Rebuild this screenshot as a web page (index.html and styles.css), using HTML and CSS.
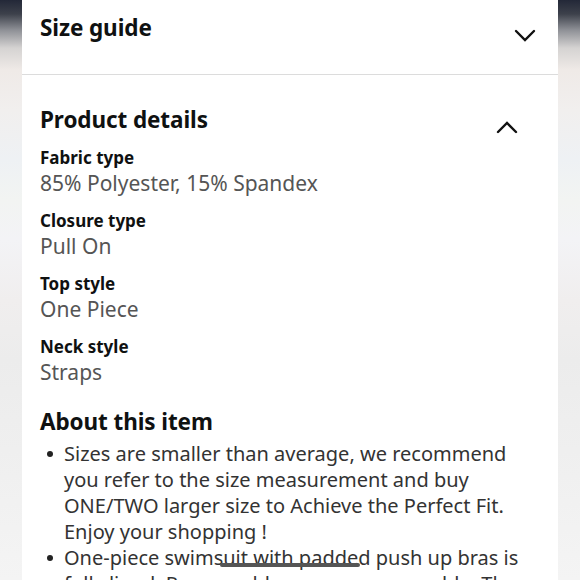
FILE: index.html
```html
<!DOCTYPE html>
<html>
<head>
<meta charset="utf-8">
<link rel="stylesheet" href="styles.css">
</head>
<body>
<div class="page">
  <div class="gutter"></div>
  <main class="panel">
    <section class="section size-guide">
      <h2 class="title">Size guide</h2>
      <svg class="chev chev-down" width="22" height="14" viewBox="0 0 22 14"><path d="M2 2 L11 11 L20 2" fill="none" stroke="#111" stroke-width="2.4" stroke-linecap="round"/></svg>
    </section>
    <section class="section details">
      <div class="details-head">
        <h2 class="title">Product details</h2>
        <svg class="chev chev-up" width="22" height="14" viewBox="0 0 22 14"><path d="M2 12 L11 3 L20 12" fill="none" stroke="#111" stroke-width="2.4" stroke-linecap="round"/></svg>
      </div>
      <dl class="attrs">
        <div class="attr"><dt>Fabric type</dt><dd>85% Polyester, 15% Spandex</dd></div>
        <div class="attr"><dt>Closure type</dt><dd>Pull On</dd></div>
        <div class="attr"><dt>Top style</dt><dd>One Piece</dd></div>
        <div class="attr"><dt>Neck style</dt><dd>Straps</dd></div>
      </dl>
      <h2 class="title about">About this item</h2>
      <ul class="bullets">
        <li>Sizes are smaller than average, we recommend you refer to the size measurement and buy ONE/TWO larger size to Achieve the Perfect Fit. Enjoy your shopping !</li>
        <li>One-piece swimsuit with padded push up bras is fully lined. Removeable cups are removable. The</li>
      </ul>
    </section>
  </main>
  <div class="gutter"></div>
  <div class="home-bar"></div>
</div>
</body>
</html>
```
FILE: styles.css
```css
html, body {
  margin: 0;
  padding: 0;
}
body {
  width: 580px;
  height: 580px;
  overflow: hidden;
  font-family: "Noto Sans", "Open Sans", sans-serif;
  color: #0f1111;
}
.page {
  position: relative;
  display: flex;
  height: 580px;
  overflow: hidden;
}
.gutter {
  width: 22px;
  flex: none;
  background: linear-gradient(180deg, #232838 0px, #3d414b 14px, #8e9096 30px, #d5d3d2 48px, #efeae7 70px, #f1efee 110px, #eef1f4 160px, #f2f4f2 200px, #f3f3f6 240px, #f0eeee 300px, #ececec 360px, #efefef 450px, #f4f4f4 580px);
}
.panel {
  flex: 1;
  background: #fff;
  min-width: 0;
}
.section {
  padding: 0 18px;
}
.size-guide {
  height: 74px;
  border-bottom: 1px solid #dcdcdc;
  display: flex;
  justify-content: space-between;
  align-items: flex-start;
}
.title {
  margin: 0;
  font-size: 22.5px;
  line-height: 32px;
  font-weight: 700;
  letter-spacing: -0.1px;
}
.size-guide .title {
  margin-top: 12px;
}
.chev {
  display: block;
  flex: none;
}
.chev-down {
  margin-top: 29px;
  margin-right: 4px;
}
.details {
  padding-top: 29px;
}
.details-head {
  display: flex;
  justify-content: space-between;
  align-items: flex-start;
  height: 32px;
}
.chev-up {
  margin-top: 16px;
  margin-right: 22px;
}
.attrs {
  margin: 11px 0 0;
}
.attr {
  margin-bottom: 14px;
}
.attr dt {
  font-size: 17px;
  line-height: 22px;
  font-weight: 700;
}
.attr dd {
  margin: 1px 0 0;
  font-size: 21px;
  line-height: 26px;
  color: #555;
}
.about {
  margin-top: 21px;
}
.bullets {
  list-style: none;
  margin: 3px 0 0;
  padding: 0 0 0 24px;
  font-size: 20px;
  line-height: 26px;
  color: #333;
  max-width: 462px;
}
.bullets li {
  position: relative;
}
.bullets li::before {
  content: "";
  position: absolute;
  left: -17px;
  top: 10px;
  width: 6px;
  height: 6px;
  border-radius: 50%;
  background: #222;
}
.home-bar {
  position: absolute;
  left: 220px;
  top: 563px;
  width: 140px;
  height: 4px;
  border-radius: 2px;
  background: #555;
}
```
